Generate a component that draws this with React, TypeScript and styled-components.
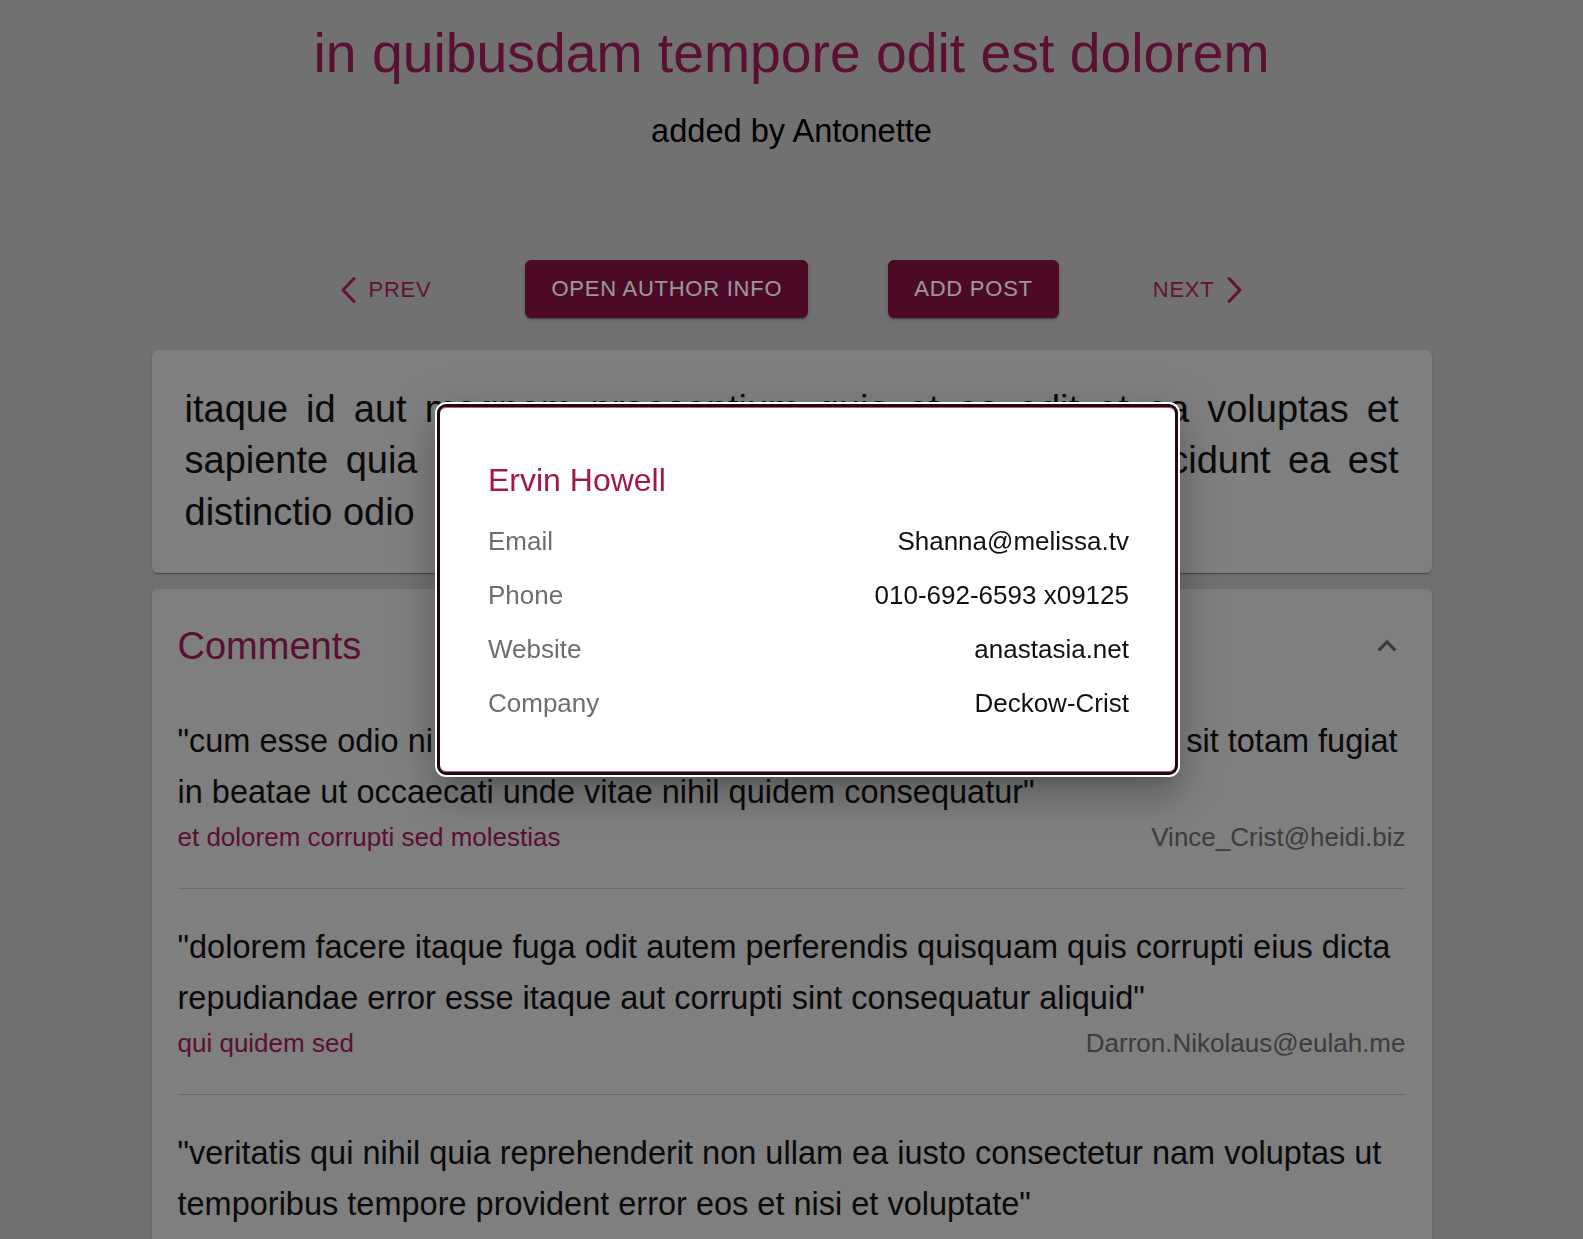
import React from "react";
import styled, { createGlobalStyle } from "styled-components";

const GlobalStyle = createGlobalStyle`
  html, body {
    margin: 0;
    padding: 0;
    background: #bcbcbc;
    overflow: hidden;
    font-family: "Liberation Sans", Arial, Helvetica, sans-serif;
  }
  * { box-sizing: border-box; }
`;

const PRIMARY = "#961955";

const Page = styled.div`
  padding-top: 20px;
  min-height: 100vh;
`;

const Title = styled.h1`
  margin: 0;
  font-size: 55.3px;
  line-height: 66px;
  font-weight: 400;
  color: ${PRIMARY};
  text-align: center;
`;

const Subtitle = styled.h2`
  margin: 25px 0 0;
  font-size: 32.6px;
  line-height: 40px;
  font-weight: 400;
  color: #000;
  text-align: center;
`;

const Toolbar = styled.nav`
  margin-top: 109px;
  display: flex;
  justify-content: center;
  align-items: center;
  gap: 80px;
`;

const ActionButton = styled.button`
  height: 58px;
  padding: 0 26px;
  border: none;
  border-radius: 6px;
  background: #7f1141;
  color: #fff;
  font-family: inherit;
  font-size: 22px;
  letter-spacing: 0.75px;
  text-transform: uppercase;
  box-shadow: 0 3px 1px -2px rgba(0, 0, 0, 0.2), 0 2px 2px 0 rgba(0, 0, 0, 0.14),
    0 1px 5px 0 rgba(0, 0, 0, 0.12);
  cursor: pointer;
`;

const NavButton = styled.button`
  height: 58px;
  padding: 2px 14px 0;
  border: none;
  background: transparent;
  color: #a81c60;
  font-family: inherit;
  font-size: 22px;
  letter-spacing: 0.75px;
  text-transform: uppercase;
  display: flex;
  align-items: center;
  gap: 13px;
  cursor: pointer;
`;

const Chevron = ({ dir }: { dir: "left" | "right" }) => (
  <svg width="16" height="28" viewBox="0 0 16 28" aria-hidden="true">
    <path
      d={dir === "left" ? "M14 2.5 L3 14 L14 25.5" : "M2 2.5 L13 14 L2 25.5"}
      fill="none"
      stroke="currentColor"
      strokeWidth="3"
      strokeLinecap="round"
      strokeLinejoin="round"
    />
  </svg>
);

const Content = styled.main`
  width: 1280px;
  margin: 32px auto 0;
`;

const Card = styled.section`
  background: #d4d4d4;
  border-radius: 6px;
  box-shadow: 0 2px 1px -1px rgba(0, 0, 0, 0.2), 0 1px 1px 0 rgba(0, 0, 0, 0.14),
    0 1px 3px 0 rgba(0, 0, 0, 0.12);
`;

const PostCard = styled(Card)`
  padding: 33.5px 33px 34.5px;
  font-size: 38px;
  line-height: 51.5px;
  text-align: justify;
  color: #111;
`;

const CommentsCard = styled(Card)`
  margin-top: 16px;
  padding: 0 26px;
`;

const CommentsHeader = styled.div`
  padding-top: 31px;
  height: 83px;
  display: flex;
  justify-content: space-between;
  align-items: center;
`;

const CommentsHeading = styled.h3`
  margin: 0;
  font-size: 38px;
  line-height: 52px;
  font-weight: 400;
  color: ${PRIMARY};
`;

const ExpandIcon = styled.svg`
  width: 38px;
  height: 38px;
  fill: #616161;
`;

const CommentList = styled.ul`
  list-style: none;
  margin: 0;
  padding: 11px 0 0;
`;

const CommentItem = styled.li`
  padding: 33px 0;
  border-bottom: 1px solid #b1b1b1;
  &:last-child {
    border-bottom: none;
  }
`;

const CommentBody = styled.p`
  margin: 0;
  font-size: 32.5px;
  line-height: 51.5px;
  color: #111;
`;

const CommentMeta = styled.div`
  display: flex;
  justify-content: space-between;
  font-size: 26px;
  line-height: 36px;
`;

const CommentName = styled.span`
  color: ${PRIMARY};
`;

const CommentEmail = styled.span`
  color: #646464;
`;

const Backdrop = styled.div`
  position: fixed;
  inset: 0;
  background: rgba(0, 0, 0, 0.4);
`;

const Dialog = styled.div`
  position: fixed;
  left: 437px;
  top: 404px;
  width: 741px;
  height: 371px;
  padding: 53px 46px 41px 48px;
  background: #fff;
  border: 3px solid #1d0a14;
  border-radius: 9px;
  box-shadow: 0 0 0 2px #fff, inset 0 1px 0 #c2557f, inset 0 -1px 0 #c2557f,
    0 11px 15px -7px rgba(0, 0, 0, 0.2), 0 24px 38px 3px rgba(0, 0, 0, 0.14),
    0 9px 46px 8px rgba(0, 0, 0, 0.12);
`;

const AuthorName = styled.h2`
  margin: 0 0 14px;
  font-size: 32px;
  line-height: 40px;
  font-weight: 400;
  color: #a3174f;
`;

const InfoRow = styled.div`
  height: 54px;
  display: flex;
  justify-content: space-between;
  align-items: center;
  font-size: 26px;
`;

const InfoLabel = styled.span`
  color: #6e6e6e;
`;

const InfoValue = styled.span`
  color: #111;
`;

const comments = [
  {
    body: "cum esse odio nihil reiciendis illum quaerat quo facilis quia occaecati sit totam fugiat in beatae ut occaecati unde vitae nihil quidem consequatur",
    name: "et dolorem corrupti sed molestias",
    email: "Vince_Crist@heidi.biz",
  },
  {
    body: "dolorem facere itaque fuga odit autem perferendis quisquam quis corrupti eius dicta repudiandae error esse itaque aut corrupti sint consequatur aliquid",
    name: "qui quidem sed",
    email: "Darron.Nikolaus@eulah.me",
  },
  {
    body: "veritatis qui nihil quia reprehenderit non ullam ea iusto consectetur nam voluptas ut temporibus tempore provident error eos et nisi et voluptate",
    name: "sint minus reiciendis qui perspiciatis id",
    email: "Ezra_Abshire@lyda.us",
  },
];

const author = [
  ["Email", "Shanna@melissa.tv"],
  ["Phone", "010-692-6593 x09125"],
  ["Website", "anastasia.net"],
  ["Company", "Deckow-Crist"],
];

export default function App() {
  return (
    <>
      <GlobalStyle />
      <Page>
        <Title>in quibusdam tempore odit est dolorem</Title>
        <Subtitle>added by Antonette</Subtitle>
        <Toolbar>
          <NavButton>
            <Chevron dir="left" />
            Prev
          </NavButton>
          <ActionButton>Open author info</ActionButton>
          <ActionButton>Add post</ActionButton>
          <NavButton>
            Next
            <Chevron dir="right" />
          </NavButton>
        </Toolbar>
        <Content>
          <PostCard>
            itaque id aut magnam praesentium quia et ea odit et ea voluptas et sapiente quia nihil
            amet occaecati quia id voluptatem incidunt ea est distinctio odio
          </PostCard>
          <CommentsCard>
            <CommentsHeader>
              <CommentsHeading>Comments</CommentsHeading>
              <ExpandIcon viewBox="0 0 24 24">
                <path d="M12 8l-6 6 1.41 1.41L12 10.83l4.59 4.58L18 14z" />
              </ExpandIcon>
            </CommentsHeader>
            <CommentList>
              {comments.map((c) => (
                <CommentItem key={c.email}>
                  <CommentBody>"{c.body}"</CommentBody>
                  <CommentMeta>
                    <CommentName>{c.name}</CommentName>
                    <CommentEmail>{c.email}</CommentEmail>
                  </CommentMeta>
                </CommentItem>
              ))}
            </CommentList>
          </CommentsCard>
        </Content>
      </Page>
      <Backdrop />
      <Dialog role="dialog">
        <AuthorName>Ervin Howell</AuthorName>
        {author.map(([label, value]) => (
          <InfoRow key={label}>
            <InfoLabel>{label}</InfoLabel>
            <InfoValue>{value}</InfoValue>
          </InfoRow>
        ))}
      </Dialog>
    </>
  );
}
